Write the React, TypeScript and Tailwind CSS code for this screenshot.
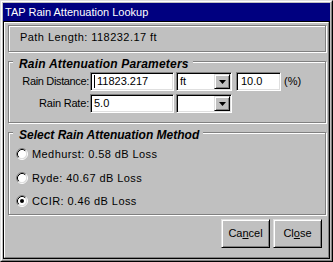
import React from "react";

const sunken =
  "border border-t-[#808080] border-l-[#808080] border-r-white border-b-white shadow-[inset_1px_1px_0_#000,inset_-1px_-1px_0_#dfdfdf]";
const raised =
  "border border-t-[#dfdfdf] border-l-[#dfdfdf] border-r-black border-b-black shadow-[inset_1px_1px_0_#fff,inset_-1px_-1px_0_#808080]";
const etched = "border border-[#808080] shadow-[inset_1px_1px_0_#fff,1px_1px_0_#fff]";

function Arrow() {
  return (
    <svg width="7" height="4" viewBox="0 0 7 4">
      <polygon points="0,0 7,0 3.5,4" fill="#000" />
    </svg>
  );
}

function Select({ value }: { value: string }) {
  return (
    <div className={`relative h-[19px] w-[56px] bg-white ${sunken} flex items-center pl-[3px]`}>
      <span>{value}</span>
      <div
        className={`absolute right-[1px] top-[1px] h-[15px] w-[16px] bg-[#c0c0c0] ${raised} flex items-center justify-center`}
      >
        <Arrow />
      </div>
    </div>
  );
}

function Radio({ checked, label }: { checked?: boolean; label: string }) {
  return (
    <div className="flex items-center h-[12px]">
      <svg width="12" height="12" viewBox="0 0 12 12" className="shrink-0">
        <circle cx="6" cy="6" r="4.5" fill="#fff" />
        <path d="M2.11 9.89 A5.5 5.5 0 0 1 9.89 2.11" stroke="#808080" strokeWidth="1" fill="none" />
        <path d="M9.89 2.11 A5.5 5.5 0 0 1 2.11 9.89" stroke="#fff" strokeWidth="1" fill="none" />
        <path d="M2.82 9.18 A4.5 4.5 0 0 1 9.18 2.82" stroke="#000" strokeWidth="1" fill="none" />
        <path d="M9.18 2.82 A4.5 4.5 0 0 1 2.82 9.18" stroke="#dfdfdf" strokeWidth="1" fill="none" />
        {checked && <circle cx="6" cy="6" r="2" fill="#000" />}
      </svg>
      <span className="ml-[4px] leading-[14px] tracking-[0.42px] whitespace-nowrap">{label}</span>
    </div>
  );
}

function GroupLabel({ text, wide }: { text: string; wide?: boolean }) {
  return (
    <span
      className={`absolute top-[-5px] left-[4px] bg-[#c0c0c0] pl-[6px] pr-[4px] h-[14px] leading-[14px] text-[12px] font-bold italic text-black whitespace-nowrap ${
        wide ? "tracking-[0.2px]" : ""
      }`}
    >
      {text}
    </span>
  );
}

export default function App() {
  return (
    <div
      className="w-[333px] h-[262px] bg-[#c0c0c0] border border-t-[#dfdfdf] border-l-[#dfdfdf] border-r-black border-b-black text-[11px] text-black"
      style={{ fontFamily: "'Liberation Sans', Arial, sans-serif" }}
    >
      <div className="h-full border border-t-white border-l-white border-r-[#808080] border-b-[#808080] p-[1px] flex flex-col">
        <div className="h-[18px] bg-[#000080] text-white flex items-center pl-[2px] pt-[1px] shrink-0 whitespace-nowrap">
          TAP Rain Attenuation Lookup
        </div>
        <div className="flex-1 border border-black">
          <div className="h-full border border-t-white border-l-white border-r-[#808080] border-b-[#808080] pl-[3px] pr-[2px] pt-[2px] flex flex-col">
            <div className={`h-[27px] ${etched} flex items-center pl-[11px] pb-[2px] tracking-[0.45px] whitespace-nowrap`}>
              Path Length: 118232.17 ft
            </div>

            <div className={`relative mt-[9px] h-[62px] ${etched} pt-[10px]`}>
              <GroupLabel text="Rain Attenuation Parameters" wide />
              <div className="flex items-center h-[19px]">
                <div className="w-[80px] text-right tracking-[-0.35px] whitespace-nowrap">Rain Distance:</div>
                <div className={`ml-[1px] h-[19px] w-[84px] bg-white ${sunken} flex items-center pl-[3px]`}>
                  <span className="w-[1px] h-[13px] bg-black" />
                  <span className="ml-[2px]">11823.217</span>
                </div>
                <div className="ml-[2px]">
                  <Select value="ft" />
                </div>
                <div className={`ml-[4px] h-[19px] w-[45px] bg-white ${sunken} flex items-center pl-[4px]`}>
                  10.0
                </div>
                <div className="ml-[3px]">(%)</div>
              </div>
              <div className="flex items-center h-[19px] mt-[3px]">
                <div className="w-[80px] text-right tracking-[-0.2px] whitespace-nowrap">Rain Rate:</div>
                <div className={`ml-[1px] h-[19px] w-[84px] bg-white ${sunken} flex items-center pl-[3px]`}>
                  5.0
                </div>
                <div className="ml-[2px]">
                  <Select value="" />
                </div>
              </div>
            </div>

            <div className={`relative mt-[9px] h-[83px] ${etched} pt-[15px] pl-[7px]`}>
              <GroupLabel text="Select Rain Attenuation Method" />
              <Radio label="Medhurst: 0.58 dB Loss" />
              <div className="mt-[12px]">
                <Radio label="Ryde: 40.67 dB Loss" />
              </div>
              <div className="mt-[11px]">
                <Radio checked label="CCIR: 0.46 dB Loss" />
              </div>
            </div>

            <div className="mt-[4px] flex justify-end gap-[3px] pr-[4px]">
              <button className={`h-[29px] w-[49px] bg-[#c0c0c0] ${raised} flex items-center justify-center`}>
                <span>
                  Ca<span className="underline">n</span>cel
                </span>
              </button>
              <button className={`h-[29px] w-[49px] bg-[#c0c0c0] ${raised} flex items-center justify-center`}>
                <span>
                  Cl<span className="underline">o</span>se
                </span>
              </button>
            </div>
          </div>
        </div>
      </div>
    </div>
  );
}
